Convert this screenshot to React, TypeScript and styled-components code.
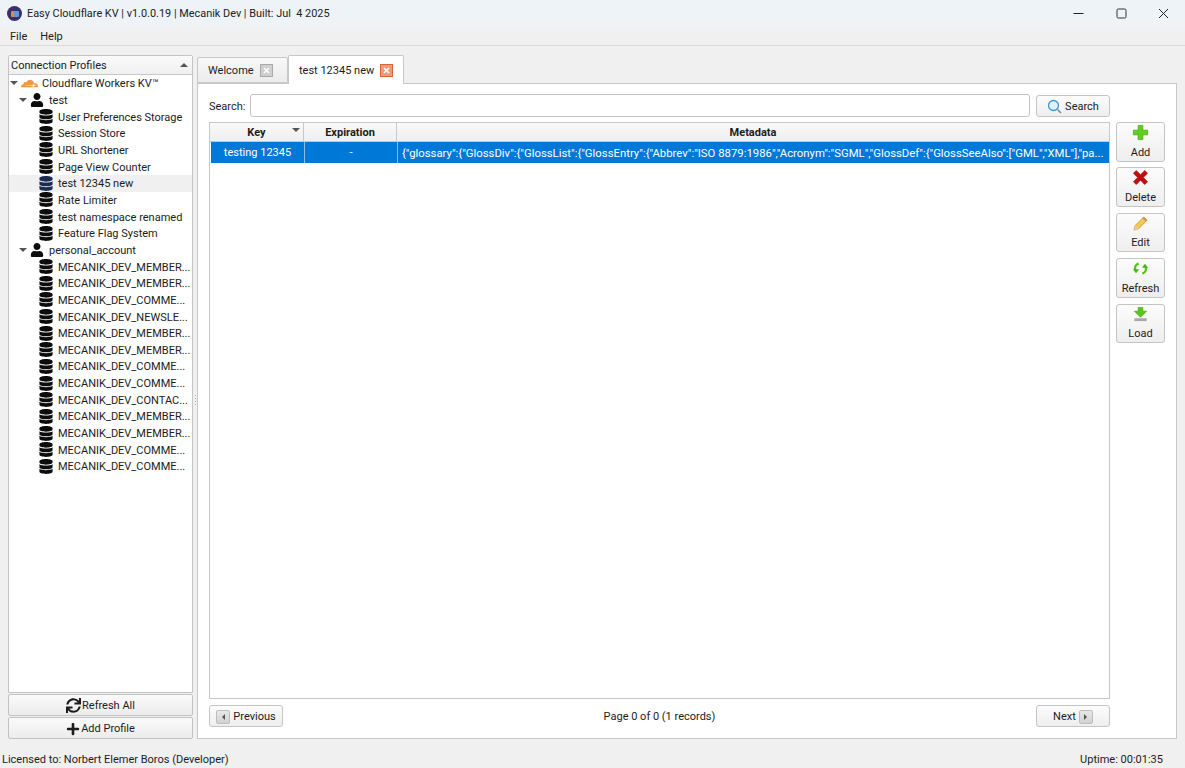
import React from "react";
import styled, { createGlobalStyle } from "styled-components";
import { FaDatabase, FaUser, FaSync, FaPlus } from "react-icons/fa";
import { SiCloudflare } from "react-icons/si";

const Global = createGlobalStyle`
  html, body { margin: 0; padding: 0; height: 100%; overflow: hidden; }
  body { font-family: Roboto, "Noto Sans", sans-serif; font-size: 11px; color: #1c1c1c; background: #f0f0f0; }
  #root { height: 100%; }
  * { box-sizing: border-box; }
`;

const Window = styled.div`
  height: 768px; display: flex; flex-direction: column; background: #f0f0f0;
`;
const TitleBar = styled.div`
  height: 27px; flex: none; background: #eef3f8; display: flex; align-items: center; padding-left: 7px;
`;
const AppIcon = styled.div`
  width: 15px; height: 15px; border-radius: 50%; background: #3d2f6b; display: flex; align-items: center; justify-content: center; margin-right: 5px;
  &::after { content: ""; width: 8px; height: 6px; background: linear-gradient(90deg, #e08a3a 35%, #5a9be0 35%); border-radius: 1px; }
`;
const TitleText = styled.span`
  flex: 1; white-space: pre; color: #222; font-size: 10.9px;
`;
const WinButton = styled.div`
  width: 42.5px; height: 27px; display: flex; align-items: center; justify-content: center;
`;
const MenuBar = styled.div`
  height: 19px; flex: none; display: flex; align-items: center; gap: 13px; padding: 1px 0 0 10px; border-bottom: 1px solid #dcdcdc;
`;
const Main = styled.div`
  height: 693px; flex: none; display: flex; padding: 9px 8px 0;
`;
const LeftPanel = styled.div`
  width: 185px; flex: none; display: flex; flex-direction: column;
`;
const TreeBox = styled.div`
  flex: 1; background: #fff; border: 1px solid #c4c4c4; border-radius: 2px 2px 0 0; min-height: 0;
`;
const TreeHeader = styled.div`
  height: 19px; display: flex; align-items: center; justify-content: space-between; padding: 0 4px 0 2px; border-bottom: 1px solid #c8c8c8;
  background: linear-gradient(#fafafa, #f0f0f0);
`;
const Caret = styled.span<{ $dir?: "up" | "down" | "left" | "right"; $size?: number; $color?: string }>`
  display: inline-block; width: 0; height: 0;
  border: ${p => p.$size ?? 4}px solid transparent;
  ${p => {
    const c = p.$color ?? "#555";
    switch (p.$dir) {
      case "up": return `border-bottom-color:${c}; border-top-width:0;`;
      case "left": return `border-right-color:${c}; border-left-width:0;`;
      case "right": return `border-left-color:${c}; border-right-width:0;`;
      default: return `border-top-color:${c}; border-bottom-width:0;`;
    }
  }}
`;
const TreeRow = styled.div<{ $indent: number; $selected?: boolean }>`
  height: 16.67px; display: flex; align-items: center; padding-left: ${p => p.$indent}px; white-space: nowrap;
  background: ${p => (p.$selected ? "#f0f0f0" : "transparent")};
`;
const RowLabel = styled.span`
  padding-top: 1px;
`;
const Toggle = styled.span`
  width: 11px; flex: none; display: flex; align-items: center;
`;
const DbGlyph = styled(FaDatabase)<{ $selected?: boolean }>`
  width: 14px; height: 15px; flex: none; margin-right: 5px; color: ${p => (p.$selected ? "#1c2c50" : "#0c0c0c")};
`;
const UserGlyph = styled(FaUser)`
  width: 14px; height: 14px; flex: none; margin-right: 5px; color: #0c0c0c;
`;
const CloudGlyph = styled(SiCloudflare)`
  width: 17px; height: 17px; flex: none; margin-right: 4px; color: #ee9a45;
`;
const SideButton = styled.div`
  height: 22px; flex: none; display: flex; align-items: center; justify-content: center; gap: 1px; margin-top: 1px; padding-top: 1px;
  background: linear-gradient(#fafafa, #ececec); border: 1px solid #c2c2c2; border-radius: 2px;
  svg { flex: none; }
`;
const Splitter = styled.div`
  width: 4px; flex: none; display: flex; flex-direction: column; align-items: center; justify-content: center; gap: 2px; padding-top: 6px;
  i { width: 1px; height: 1px; background: #aaa; display: block; }
`;
const RightPanel = styled.div`
  flex: 1; display: flex; flex-direction: column; min-width: 0;
`;
const TabBar = styled.div`
  height: 28px; flex: none; display: flex; align-items: flex-end; position: relative; z-index: 1;
`;
const Tab = styled.div<{ $active?: boolean }>`
  display: flex; align-items: center; justify-content: flex-start; gap: 6px; padding: 1px 0 0 10px;
  height: ${p => (p.$active ? 29 : 26)}px; width: ${p => (p.$active ? 116 : 91)}px; margin-bottom: ${p => (p.$active ? -1 : 0)}px;
  background: ${p => (p.$active ? "#fff" : "linear-gradient(#f8f8f8, #ececec)")};
  border: 1px solid #c8c8c8; border-bottom: ${p => (p.$active ? "none" : "1px solid #c8c8c8")};
  border-radius: 2px 2px 0 0;
`;
const TabClose = styled.span<{ $active?: boolean }>`
  width: 13px; height: 13px; display: flex; align-items: center; justify-content: center; flex: none;
  background: ${p => (p.$active ? "#ef9b77" : "#cfcfcf")}; border: 1px solid ${p => (p.$active ? "#d9633a" : "#a9a9a9")};
  svg { display: block; }
`;
const Pane = styled.div`
  flex: 1; background: #fff; border: 1px solid #c8c8c8; display: grid; grid-template-columns: 1fr 49px; column-gap: 6px;
  padding: 10px 11px 11px 11px; min-height: 0;
`;
const CenterCol = styled.div`
  display: flex; flex-direction: column; min-width: 0;
`;
const SearchRow = styled.div`
  display: flex; align-items: center; height: 23px; margin-bottom: 5px;
`;
const SearchLabel = styled.span`
  width: 41px; flex: none; padding-top: 1px;
`;
const SearchInput = styled.div`
  flex: 1; height: 23px; background: #fff; border: 1px solid #c4c4c4; border-radius: 3px; margin-right: 6px;
`;
const PushButton = styled.div`
  display: flex; align-items: center; justify-content: center; gap: 3px; width: 74px; height: 22px; flex: none; padding-top: 1px;
  background: linear-gradient(#fcfcfc, #eeeeee); border: 1px solid #c4c4c4; border-radius: 3px;
`;
const Table = styled.div`
  flex: 1; border: 1px solid #c8c8c8; display: flex; flex-direction: column; min-height: 0; overflow: hidden;
`;
const TableHeader = styled.div`
  display: grid; grid-template-columns: 94px 93px 1fr; height: 19px; flex: none; background: linear-gradient(#f9f9f9, #efefef); border-bottom: 1px solid #c8c8c8;
`;
const HeadCell = styled.div`
  position: relative; display: flex; align-items: center; justify-content: center; font-weight: 700; border-right: 1px solid #c8c8c8;
  &:last-child { border-right: none; }
`;
const SortMark = styled.span`
  position: absolute; right: 3px; top: 5px; display: flex;
`;
const TableRow = styled.div`
  display: grid; grid-template-columns: 94px 93px 1fr; height: 21px; flex: none; background: #0078d7; color: #fff; margin-left: 1px;
`;
const Cell = styled.div<{ $left?: boolean }>`
  display: flex; align-items: center; min-width: 0; overflow: hidden; white-space: nowrap;
  justify-content: ${p => (p.$left ? "flex-start" : "center")}; padding-left: ${p => (p.$left ? 4 : 0)}px;
  font-size: ${p => (p.$left ? "11.34px" : "11px")};
  border-right: 1px solid #8fbce4;
  &:last-child { border-right: none; }
`;
const Footer = styled.div`
  display: flex; align-items: center; justify-content: space-between; height: 22px; margin-top: 6px; flex: none;
`;
const ArrowBox = styled.span`
  width: 14px; height: 14px; display: flex; align-items: center; justify-content: center;
  background: linear-gradient(#e8e8e8, #d2d2d2); border: 1px solid #bdbdbd; border-radius: 2px;
`;
const PageInfo = styled.span`
  padding-top: 1px;
`;
const ActionCol = styled.div`
  display: flex; flex-direction: column; gap: 5.9px; padding-top: 28px;
`;
const ActionButton = styled.div`
  height: 39.5px; flex: none; display: flex; flex-direction: column; align-items: center; justify-content: space-between; padding: 1px 0 1px;
  background: linear-gradient(#fcfcfc, #eeeeee); border: 1px solid #c4c4c4; border-radius: 3px;
  line-height: 15px;
  svg { display: block; }
`;
const StatusBar = styled.div`
  flex: 1; display: flex; align-items: flex-end; justify-content: space-between; padding: 0 22px 2px 2px;
`;

const Ico = styled.svg`
  flex: none;
`;

const kids1 = ["User Preferences Storage", "Session Store", "URL Shortener", "Page View Counter", "test 12345 new", "Rate Limiter", "test namespace renamed", "Feature Flag System"];
const kids2 = ["MEMBER", "MEMBER", "COMME", "NEWSLE", "MEMBER", "MEMBER", "COMME", "COMME", "CONTAC", "MEMBER", "MEMBER", "COMME", "COMME"];
const meta = `{"glossary":{"GlossDiv":{"GlossList":{"GlossEntry":{"Abbrev":"ISO 8879:1986","Acronym":"SGML","GlossDef":{"GlossSeeAlso":["GML","XML"],"pa...`;

const PlusIcon = () => (
  <Ico width="17" height="17" viewBox="0 0 18 18"><path d="M6.500 1.500h5v5h5v5h-5v5h-5v-5h-5v-5h5z" fill="#5fd01c" stroke="#3f9e10" strokeWidth=".7" /></Ico>
);
const CrossIcon = () => (
  <Ico width="17" height="17" viewBox="0 0 18 18"><path d="M1.500 4.500l3-3L9 6l4.500-4.500 3 3L12 9l4.500 4.500-3 3L9 12l-4.500 4.500-3-3L6 9z" fill="#c30d0d" stroke="#8c0808" strokeWidth=".6" /></Ico>
);
const PencilIcon = () => (
  <Ico width="17" height="17" viewBox="0 0 18 18">
    <path d="M2 16l1.500-5L12.500 2l3.500 3.500L7 14.500z" fill="#f2cb4e" stroke="#c98a2a" strokeWidth=".8" />
    <path d="M12.500 2l3.500 3.500-1.500 1.500L11 3.500z" fill="#e58a6a" />
    <path d="M2 16l1.500-5 3.500 3.500z" fill="#e9c9a0" />
  </Ico>
);
const RefreshIcon = () => (
  <Ico width="17" height="17" viewBox="0 0 18 18" fill="none">
    <path d="M3.500 11A6 6 0 0 1 7 3.500" stroke="#4fc914" strokeWidth="2.600" />
    <path d="M1 9.500l3.200 4.500 3.300-4z" fill="#3fb80f" />
    <path d="M14.500 7A6 6 0 0 1 11 14.500" stroke="#4fc914" strokeWidth="2.600" />
    <path d="M17 8.500L13.800 4l-3.300 4z" fill="#3fb80f" />
  </Ico>
);
const LoadIcon = () => (
  <Ico width="17" height="17" viewBox="0 0 18 18">
    <path d="M6.500 1.500h5v4h4L9 12 2.500 5.500h4z" fill="#56c81a" stroke="#3f9e10" strokeWidth=".6" />
    <rect x="2.500" y="13" width="13" height="3" fill="#a8a8a8" />
  </Ico>
);
const SearchIcon = () => (
  <Ico width="15" height="15" viewBox="0 0 15 15" fill="none">
    <circle cx="6.500" cy="6.500" r="5" fill="#dff0fb" stroke="#3f97d6" strokeWidth="1.300" />
    <path d="M10.500 10.500L14 14" stroke="#7a8a96" strokeWidth="1.600" />
  </Ico>
);
const CloseMark = () => (
  <Ico width="7" height="7" viewBox="0 0 7 7"><path d="M1 1l5 5M6 1l-5 5" stroke="#fff" strokeWidth="1.600" /></Ico>
);

export default function App() {
  return (
    <Window>
      <Global />
      <TitleBar>
        <AppIcon />
        <TitleText>Easy Cloudflare KV | v1.0.0.19 | Mecanik Dev | Built: Jul  4 2025</TitleText>
        <WinButton>
          <Ico width="11" height="11" viewBox="0 0 11 11"><path d="M0.500 5.500h10" stroke="#222" strokeWidth="1" /></Ico>
        </WinButton>
        <WinButton>
          <Ico width="11" height="11" viewBox="0 0 11 11"><rect x="1" y="1" width="9" height="9" rx="1.200" fill="none" stroke="#333" strokeWidth="1" /></Ico>
        </WinButton>
        <WinButton>
          <Ico width="11" height="11" viewBox="0 0 11 11"><path d="M1 1l9 9M10 1l-9 9" stroke="#222" strokeWidth="1" /></Ico>
        </WinButton>
      </TitleBar>
      <MenuBar><span>File</span><span>Help</span></MenuBar>
      <Main>
        <LeftPanel>
          <TreeBox>
            <TreeHeader><span>Connection Profiles</span><Caret $dir="up" /></TreeHeader>
            <TreeRow $indent={1}>
              <Toggle><Caret $dir="down" /></Toggle>
              <CloudGlyph /><RowLabel>Cloudflare Workers KV™</RowLabel>
            </TreeRow>
            <TreeRow $indent={10}>
              <Toggle><Caret $dir="down" /></Toggle>
              <UserGlyph /><RowLabel>test</RowLabel>
            </TreeRow>
            {kids1.map((k, i) => (
              <TreeRow key={k} $indent={30} $selected={i === 4}><DbGlyph $selected={i === 4} /><RowLabel>{k}</RowLabel></TreeRow>
            ))}
            <TreeRow $indent={10}>
              <Toggle><Caret $dir="down" /></Toggle>
              <UserGlyph /><RowLabel>personal_account</RowLabel>
            </TreeRow>
            {kids2.map((k, i) => (
              <TreeRow key={i} $indent={30}><DbGlyph /><RowLabel>MECANIK_DEV_{k}...</RowLabel></TreeRow>
            ))}
          </TreeBox>
          <SideButton><FaSync size={15} />Refresh All</SideButton>
          <SideButton><FaPlus size={14} />Add Profile</SideButton>
        </LeftPanel>
        <Splitter><i /><i /><i /><i /></Splitter>
        <RightPanel>
          <TabBar>
            <Tab>Welcome<TabClose><CloseMark /></TabClose></Tab>
            <Tab $active>test 12345 new<TabClose $active><CloseMark /></TabClose></Tab>
          </TabBar>
          <Pane>
            <CenterCol>
              <SearchRow>
                <SearchLabel>Search:</SearchLabel>
                <SearchInput />
                <PushButton><SearchIcon />Search</PushButton>
              </SearchRow>
              <Table>
                <TableHeader>
                  <HeadCell>Key<SortMark><Caret $dir="down" /></SortMark></HeadCell>
                  <HeadCell>Expiration</HeadCell>
                  <HeadCell>Metadata</HeadCell>
                </TableHeader>
                <TableRow>
                  <Cell>testing 12345</Cell>
                  <Cell>-</Cell>
                  <Cell $left>{meta}</Cell>
                </TableRow>
              </Table>
              <Footer>
                <PushButton><ArrowBox><Caret $dir="left" $size={3} /></ArrowBox>Previous</PushButton>
                <PageInfo>Page 0 of 0 (1 records)</PageInfo>
                <PushButton>Next<ArrowBox><Caret $dir="right" $size={3} /></ArrowBox></PushButton>
              </Footer>
            </CenterCol>
            <ActionCol>
              <ActionButton><PlusIcon />Add</ActionButton>
              <ActionButton><CrossIcon />Delete</ActionButton>
              <ActionButton><PencilIcon />Edit</ActionButton>
              <ActionButton><RefreshIcon />Refresh</ActionButton>
              <ActionButton><LoadIcon />Load</ActionButton>
            </ActionCol>
          </Pane>
        </RightPanel>
      </Main>
      <StatusBar>
        <span>Licensed to: Norbert Elemer Boros (Developer)</span>
        <span>Uptime: 00:01:35</span>
      </StatusBar>
    </Window>
  );
}
